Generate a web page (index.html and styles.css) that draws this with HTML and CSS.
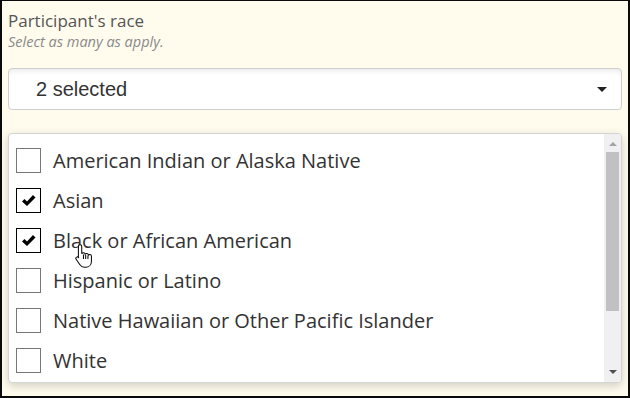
FILE: index.html
```html
<!DOCTYPE html>
<html lang="en">
<head>
  <meta charset="UTF-8">
  <title>Participant's race</title>
  <link rel="stylesheet" href="styles.css">
</head>
<body>
  <div class="frame">
    <div class="question">
      <div class="q-label">Participant's race</div>
      <div class="q-hint">Select as many as apply.</div>
    </div>

    <div class="select">
      <span class="select-text">2 selected</span>
      <span class="caret"></span>
    </div>

    <div class="dropdown">
      <ul class="options">
        <li><span class="box"></span>American Indian or Alaska Native</li>
        <li>
          <span class="box checked">
            <svg width="15" height="13" viewBox="0 0 15 13"><path d="M1 7.5l2.5-2.5 2.5 2.5L12 1l2.5 2.5L6 12z" fill="#000"/></svg>
          </span>Asian
        </li>
        <li>
          <span class="box checked">
            <svg width="15" height="13" viewBox="0 0 15 13"><path d="M1 7.5l2.5-2.5 2.5 2.5L12 1l2.5 2.5L6 12z" fill="#000"/></svg>
          </span>Black or African American
        </li>
        <li><span class="box"></span>Hispanic or Latino</li>
        <li><span class="box"></span>Native Hawaiian or Other Pacific Islander</li>
        <li><span class="box"></span>White</li>
      </ul>
      <div class="scrollbar">
        <span class="arrow up"></span>
        <div class="track"><div class="thumb"></div></div>
        <span class="arrow down"></span>
      </div>
    </div>

    <svg class="cursor" width="18" height="25" viewBox="0 0 16 22">
      <path d="M4.5 1.5c.8 0 1.5.7 1.5 1.5v6.5c.3-.6.9-.9 1.5-.9.8 0 1.4.6 1.5 1.3.3-.4.8-.7 1.4-.7.8 0 1.4.6 1.5 1.4.3-.3.7-.5 1.2-.5.9 0 1.5.7 1.5 1.6v4.3c0 3-2 5.4-5.3 5.4H8.4c-1.8 0-3-.8-4-2.2L1 14.4c-.5-.7-.3-1.6.4-2 .6-.4 1.4-.2 1.8.3L3 12.9V3c0-.8.7-1.5 1.5-1.5z" fill="#fff" stroke="#000" stroke-width="0.9"/>
      <path d="M7.5 10v4M9.5 10.5v3.5M11.5 11v3" stroke="#000" stroke-width="0.9" fill="none"/>
    </svg>
  </div>
</body>
</html>
```

FILE: styles.css
```css
html, body {
  margin: 0;
  padding: 0;
}

body {
  width: 630px;
  height: 398px;
  background: #000;
  font-family: "Open Sans", sans-serif;
}

.frame {
  position: relative;
  box-sizing: border-box;
  width: 630px;
  height: 398px;
  border: 2px solid #0a0a0a;
  border-top-width: 1px;
  background: #fffcee;
  padding: 8px 6px 0 6px;
  overflow: hidden;
}

.q-label {
  font-size: 17px;
  color: #555;
  line-height: 23px;
}

.q-hint {
  font-size: 14.5px;
  font-style: italic;
  color: #8a8a8a;
  line-height: 19px;
}

.select {
  display: flex;
  align-items: center;
  justify-content: space-between;
  height: 42px;
  box-sizing: border-box;
  margin-top: 17px;
  border: 1px solid #cfcfcf;
  border-radius: 4px;
  background: #fff;
  box-shadow: inset 0 5px 6px -4px #e4e4e4;
  padding: 0 14px 0 27px;
}

.select-text {
  font-family: "Liberation Sans", Arial, sans-serif;
  font-size: 20px;
  color: #333;
}

.caret {
  width: 0;
  height: 0;
  border-left: 5px solid transparent;
  border-right: 5px solid transparent;
  border-top: 5px solid #222;
}

.dropdown {
  display: flex;
  height: 250px;
  box-sizing: border-box;
  margin-top: 23px;
  border: 1px solid #d4d4d4;
  border-radius: 4px;
  background: #fff;
  box-shadow: 0 3px 10px rgba(0, 0, 0, 0.18);
  overflow: hidden;
}

.options {
  flex: 1;
  list-style: none;
  margin: 0;
  padding: 6px 0 0 7px;
}

.options li {
  display: flex;
  align-items: center;
  height: 40px;
  font-size: 20px;
  color: #333;
}

.box {
  display: inline-flex;
  align-items: center;
  justify-content: center;
  width: 25px;
  height: 25px;
  box-sizing: border-box;
  border: 1px solid #777;
  margin-right: 12px;
}

.box.checked {
  border-color: #000;
}

.scrollbar {
  display: flex;
  flex-direction: column;
  align-items: center;
  width: 17px;
  background: #f0f0f0;
}

.arrow {
  width: 0;
  height: 0;
  border-left: 4px solid transparent;
  border-right: 4px solid transparent;
  margin: 8px 0 6px;
}

.arrow.up {
  border-bottom: 4px solid #a3a3a3;
}

.arrow.down {
  border-top: 4px solid #505050;
  margin: 6px 0 8px;
}

.track {
  flex: 1;
  width: 13px;
}

.thumb {
  height: 159px;
  background: #c1c1c1;
}

.cursor {
  position: absolute;
  left: 73px;
  top: 242px;
}
```
